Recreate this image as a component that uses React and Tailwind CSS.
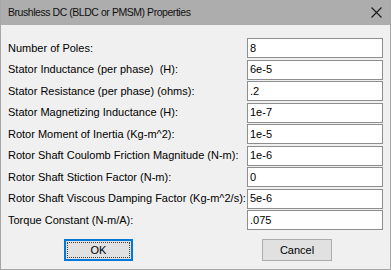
const fields = [
  { label: 'Number of Poles:', value: '8' },
  { label: 'Stator Inductance (per phase)  (H):', value: '6e-5' },
  { label: 'Stator Resistance (per phase) (ohms):', value: '.2' },
  { label: 'Stator Magnetizing Inductance (H):', value: '1e-7' },
  { label: 'Rotor Moment of Inertia (Kg-m^2):', value: '1e-5' },
  { label: 'Rotor Shaft Coulomb Friction Magnitude (N-m):', value: '1e-6' },
  { label: 'Rotor Shaft Stiction Factor (N-m):', value: '0' },
  { label: 'Rotor Shaft Viscous Damping Factor (Kg-m^2/s):', value: '5e-6' },
  { label: 'Torque Constant (N-m/A):', value: '.075' },
];

export default function App() {
  return (
    <div className="flex h-[270px] w-[391px] flex-col overflow-hidden border border-t-0 border-[#a6a6a6] bg-[#f0f0f0] font-['Liberation_Sans',Arial,sans-serif] text-[11px] text-black">
      {/* title bar */}
      <div className="flex h-[25px] shrink-0 items-center justify-between bg-[#adadad] pl-[7px] pr-[7px]">
        <span className="text-[10.5px] tracking-[-0.45px] text-[#111]">
          Brushless DC (BLDC or PMSM) Properties
        </span>
        <svg width="11" height="11" viewBox="0 0 11 11" className="mr-[1px]">
          <path d="M0.5 0.5L10.5 10.5M10.5 0.5L0.5 10.5" stroke="#1a1a1a" strokeWidth="1.1" fill="none" />
        </svg>
      </div>

      {/* fields */}
      <div className="mt-[13px] flex flex-col gap-[1.5px] pl-[7px] pr-[7px]">
        {fields.map((f) => (
          <div key={f.label} className="flex h-[20px] items-center justify-between">
            <span className="whitespace-pre">{f.label}</span>
            <div className="flex h-[20px] w-[136px] items-center border border-[#8e8e8e] bg-white pl-[2px]">
              {f.value}
            </div>
          </div>
        ))}
      </div>

      {/* buttons */}
      <div className="mt-[9px] flex pl-[63px]">
        <button
          type="button"
          className="flex h-[22px] w-[69px] items-center justify-center border-2 border-[#0078d7] bg-[#e1e1e1] p-[1px] text-[11px]"
        >
          <span className="flex h-full w-full items-center justify-center border border-dotted border-[#444]">
            OK
          </span>
        </button>
        <button
          type="button"
          className="ml-[129px] flex h-[22px] w-[70px] items-center justify-center border border-[#adadad] bg-[#e1e1e1] text-[11px]"
        >
          Cancel
        </button>
      </div>
    </div>
  );
}
